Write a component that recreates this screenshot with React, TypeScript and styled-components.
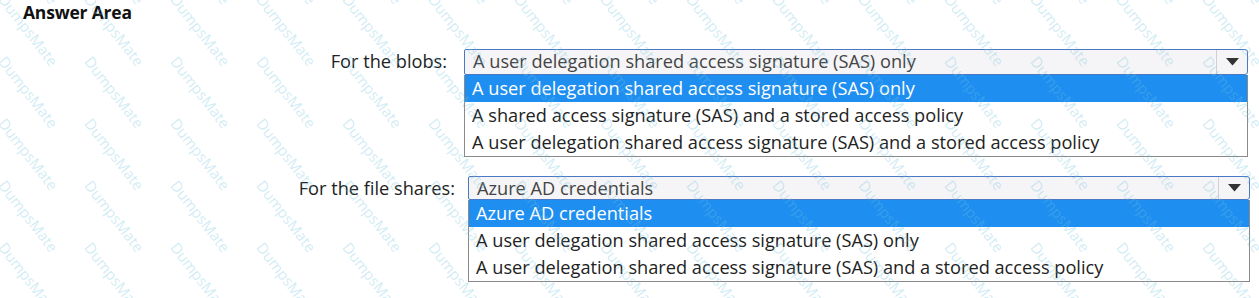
import React from "react";
import styled, { createGlobalStyle } from "styled-components";

const Global = createGlobalStyle`
  html, body { margin: 0; padding: 0; background: #ffffff; }
  body { font-family: "Open Sans", "Noto Sans", sans-serif; color: #333; }
`;

const Page = styled.div`
  position: relative;
  width: 1259px;
  height: 298px;
  overflow: hidden;
  background: #fff;
`;

const Title = styled.h1`
  margin: 0;
  padding: 1px 0 0 23px;
  height: 24px;
  font-family: "Open Sans", sans-serif;
  font-weight: 700;
  font-size: 17.5px;
  line-height: 22px;
  letter-spacing: -0.2px;
  color: #111;
`;

const Rows = styled.div`
  display: flex;
  flex-direction: column;
`;

const Row = styled.div<{ $top: number; $selRight: number }>`
  display: flex;
  align-items: flex-start;
  margin-top: ${(p) => p.$top}px;
  padding-right: ${(p) => 1259 - p.$selRight}px;
`;

const Label = styled.div<{ $width: number; $gap: number }>`
  width: ${(p) => p.$width}px;
  margin-right: ${(p) => p.$gap}px;
  text-align: right;
  font-size: 18.2px;
  line-height: 25px;
  color: #222;
  flex: none;
`;

const Dropdown = styled.div`
  flex: 1;
  display: flex;
  flex-direction: column;
`;

const Select = styled.div<{ $h: number }>`
  display: flex;
  height: ${(p) => p.$h}px;
  border: 1px solid #4a78c2;
  border-radius: 2px 3px 3px 2px;
  background: #f5f4f6;
  box-sizing: border-box;
`;

const SelectText = styled.div`
  flex: 1;
  padding-left: 8px;
  font-size: 18.2px;
  line-height: 22px;
  color: #444;
  white-space: nowrap;
`;

const Arrow = styled.div`
  width: 30px;
  border-left: 1px solid #d0d0d4;
  display: flex;
  align-items: center;
  justify-content: center;
`;

const List = styled.div`
  border: 1px solid #8a8a8a;
  border-top: none;
  background: transparent;
`;

const Option = styled.div<{ $selected?: boolean }>`
  height: 27px;
  padding-left: 7px;
  font-size: 18.2px;
  line-height: 26px;
  white-space: nowrap;
  color: ${(p) => (p.$selected ? "#fff" : "#222")};
  background: ${(p) => (p.$selected ? "#1e8ef0" : "transparent")};
`;

const Watermark = styled.div`
  position: absolute;
  inset: 0;
  pointer-events: none;
  overflow: hidden;
`;

const Mark = styled.span`
  position: absolute;
  font-family: "Open Sans", sans-serif;
  font-size: 15px;
  color: rgba(110, 195, 225, 0.33);
  transform: rotate(52deg);
  transform-origin: 0 0;
  white-space: nowrap;
`;

const marks: { x: number; y: number }[] = [];
for (let r = -3; r < 6; r++) {
  for (let c = -2; c < 16; c++) {
    marks.push({ x: c * 86 + 10, y: r * 62 - 10 });
  }
}

function ArrowIcon() {
  return (
    <svg width="13" height="8" viewBox="0 0 13 8">
      <path d="M0 0 H13 L6.5 7.5 Z" fill="#333" />
    </svg>
  );
}

type DD = {
  label: string;
  value: string;
  options: string[];
  top: number;
  labelWidth: number;
  gap: number;
  selRight: number;
  selH: number;
};

const dropdowns: DD[] = [
  {
    label: "For the blobs:",
    value: "A user delegation shared access signature (SAS) only",
    options: [
      "A user delegation shared access signature (SAS) only",
      "A shared access signature (SAS) and a stored access policy",
      "A user delegation shared access signature (SAS) and a stored access policy",
    ],
    top: 24,
    labelWidth: 447,
    gap: 17,
    selRight: 1248,
    selH: 26,
  },
  {
    label: "For the file shares:",
    value: "Azure AD credentials",
    options: [
      "Azure AD credentials",
      "A user delegation shared access signature (SAS) only",
      "A user delegation shared access signature (SAS) and a stored access policy",
    ],
    top: 19,
    labelWidth: 455,
    gap: 13,
    selRight: 1250,
    selH: 24,
  },
];

export default function App() {
  return (
    <Page>
      <Global />
      <Title>Answer Area</Title>
      <Rows>
        {dropdowns.map((d) => (
          <Row key={d.label} $top={d.top} $selRight={d.selRight}>
            <Label $width={d.labelWidth} $gap={d.gap}>{d.label}</Label>
            <Dropdown>
              <Select $h={d.selH}>
                <SelectText>{d.value}</SelectText>
                <Arrow><ArrowIcon /></Arrow>
              </Select>
              <List>
                {d.options.map((o, i) => (
                  <Option key={o} $selected={i === 0}>{o}</Option>
                ))}
              </List>
            </Dropdown>
          </Row>
        ))}
      </Rows>
      <Watermark aria-hidden>
        {marks.map((m, i) => (
          <Mark key={i} style={{ left: m.x, top: m.y }}>DumpsMate</Mark>
        ))}
      </Watermark>
    </Page>
  );
}
